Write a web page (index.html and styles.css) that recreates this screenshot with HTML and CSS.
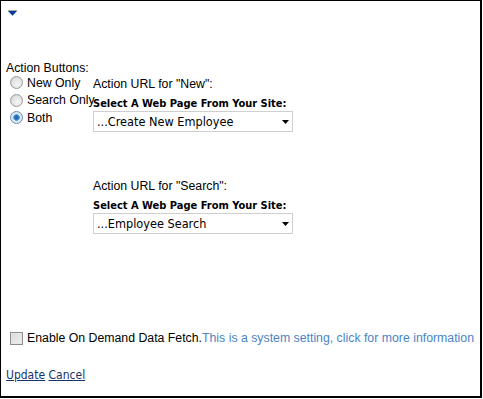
FILE: index.html
```html
<!DOCTYPE html>
<html>
<head>
<meta charset="utf-8">
<link rel="stylesheet" href="styles.css">
</head>
<body>
<div class="frame">
  <div class="toggle">
    <svg width="9" height="6" viewBox="0 0 9 6"><rect x="0" y="0" width="9" height="1" fill="#a8a8a8"/><path d="M0 1H9L4.5 5.8Z" fill="#0b3a9c"/></svg>
  </div>
  <div class="section-label">Action Buttons:</div>
  <div class="action-grid">
    <div class="radios">
      <label class="opt"><span class="radio"></span>New Only</label>
      <label class="opt"><span class="radio"></span>Search Only</label>
      <label class="opt"><span class="radio checked"></span>Both</label>
    </div>
    <div class="urls">
      <div class="url-block">
        <div class="url-title">Action URL for "New":</div>
        <div class="pick-label">Select A Web Page From Your Site:</div>
        <div class="select-box"><span>...Create New Employee</span><svg width="7" height="4" viewBox="0 0 7 4"><path d="M0 0H7L3.5 4Z" fill="#000"/></svg></div>
      </div>
      <div class="url-block second">
        <div class="url-title">Action URL for "Search":</div>
        <div class="pick-label">Select A Web Page From Your Site:</div>
        <div class="select-box"><span>...Employee Search</span><svg width="7" height="4" viewBox="0 0 7 4"><path d="M0 0H7L3.5 4Z" fill="#000"/></svg></div>
      </div>
    </div>
  </div>
  <div class="fetch-row">
    <span class="checkbox"></span>
    <span>Enable On Demand Data Fetch.</span><a class="info-link">This is a system setting, click for more information</a>
  </div>
  <div class="actions">
    <a class="act">Update</a> <a class="act">Cancel</a>
  </div>
</div>
</body>
</html>
```
FILE: styles.css
```css
html, body {
  margin: 0;
  padding: 0;
  background: #fff;
}
body {
  font-family: "Liberation Sans", Arial, sans-serif;
  font-size: 12.3px;
  color: #000;
}
.frame {
  box-sizing: border-box;
  width: 482px;
  height: 398px;
  border-top: 1px solid #000;
  border-left: 1px solid #000;
  border-right: 2px solid #000;
  border-bottom: 2px solid #000;
}
.toggle {
  height: 6px;
  padding: 9px 0 0 7px;
  line-height: 0;
}
.section-label {
  margin-top: 45px;
  padding-left: 5px;
  line-height: 14px;
}
.action-grid {
  display: grid;
  grid-template-columns: 92px 1fr;
  margin-top: -1px;
}
.radios {
  display: flex;
  flex-direction: column;
  padding-left: 9px;
}
.opt {
  display: flex;
  align-items: center;
  height: 17.5px;
  white-space: nowrap;
  gap: 4px;
}
.radio {
  box-sizing: border-box;
  width: 13px;
  height: 13px;
  border-radius: 50%;
  border: 1px solid #9a9a9a;
  background: radial-gradient(circle at 60% 65%, #f6f6f6 0%, #e0e0e0 60%, #c9c9c9 100%);
  flex: none;
}
.radio.checked {
  background: radial-gradient(circle at 50% 50%, #1f5fa8 0, #2b77c5 2px, #5fa3de 3px, #d7e6f2 3.6px, #eaeaea 100%);
  border-color: #6b8fb3;
}
.urls {
  display: flex;
  flex-direction: column;
  padding-top: 3px;
}
.url-title {
  line-height: 14px;
  height: 20px;
}
.pick-label {
  font-family: "DejaVu Sans Condensed", "DejaVu Sans", sans-serif;
  font-weight: bold;
  font-size: 11px;
  line-height: 14px;
}
.select-box {
  box-sizing: border-box;
  width: 200px;
  height: 21px;
  border: 1px solid #cfcfcf;
  display: flex;
  align-items: center;
  justify-content: space-between;
  padding: 0 3px 0 3px;
  font-family: "DejaVu Sans Condensed", "DejaVu Sans", sans-serif;
  font-size: 12.6px;
}
.url-block.second {
  margin-top: 47px;
}
.fetch-row {
  display: flex;
  align-items: center;
  margin-top: 97px;
  padding-left: 9px;
  height: 14px;
  white-space: nowrap;
}
.checkbox {
  box-sizing: border-box;
  width: 13px;
  height: 13px;
  border: 1px solid #8d8d8d;
  background: linear-gradient(135deg, #d8d8d8, #f2f2f2);
  box-shadow: inset 0 0 0 1px #e6e6e6;
  margin-right: 4px;
  flex: none;
}
.info-link {
  color: #4a84c4;
}
.actions {
  margin-top: 23px;
  padding-left: 5px;
  font-family: "DejaVu Sans Condensed", "DejaVu Sans", sans-serif;
  font-size: 12px;
}
.act {
  color: #16346c;
  text-decoration: underline;
}
```
